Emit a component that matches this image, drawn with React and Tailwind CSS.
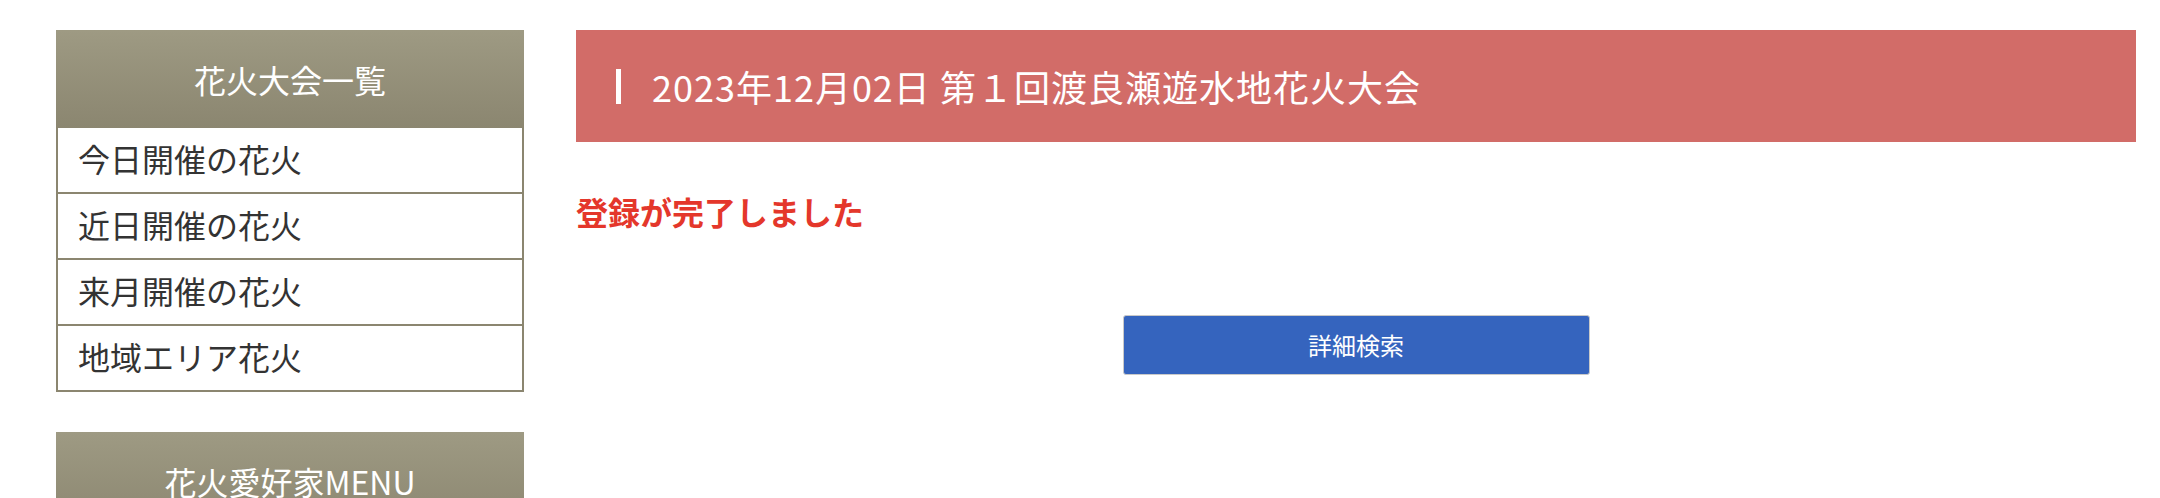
const menuItems = ["今日開催の花火", "近日開催の花火", "来月開催の花火", "地域エリア花火"];

function SideHeader({ children }) {
  return (
    <div className="h-[98px] flex items-center justify-center bg-gradient-to-b from-[#9e9a83] to-[#8b8670] text-white text-[32px]">
      {children}
    </div>
  );
}

export default function App() {
  return (
    <div
      className="w-[2160px] h-[498px] overflow-hidden bg-white flex pl-[56px] pt-[30px] pr-[24px] gap-[52px]"
      style={{ fontFamily: '"Noto Sans CJK JP", "Noto Sans", sans-serif' }}
    >
      <aside className="w-[468px] shrink-0 flex flex-col gap-[40px]">
        <div>
          <SideHeader>花火大会一覧</SideHeader>
          <ul className="border-x-2 border-[#8b8670]">
            {menuItems.map((item) => (
              <li
                key={item}
                className="h-[66px] border-b-2 border-[#8b8670] flex items-center pl-[20px] pb-[4px] text-[32px] text-[#333333]"
              >
                {item}
              </li>
            ))}
          </ul>
        </div>
        <div>
          <SideHeader>花火愛好家MENU</SideHeader>
        </div>
      </aside>

      <main className="flex-1 flex flex-col">
        <h1 className="h-[112px] bg-[#d26c68] flex items-center pl-[40px] text-white text-[36px] tracking-[1px] font-normal">
          <span className="w-[5px] h-[35px] bg-white mr-[31px]"></span>
          2023年12月02日 第１回渡良瀬遊水地花火大会
        </h1>

        <p className="mt-[45px] text-[32px] leading-[48px] font-bold text-[#e4372b]">登録が完了しました</p>

        <div className="mt-[80px] flex justify-center">
          <button className="w-[467px] h-[60px] bg-[#3564be] border border-[#c9c9c9] rounded-[3px] text-white text-[24px]">
            詳細検索
          </button>
        </div>
      </main>
    </div>
  );
}
